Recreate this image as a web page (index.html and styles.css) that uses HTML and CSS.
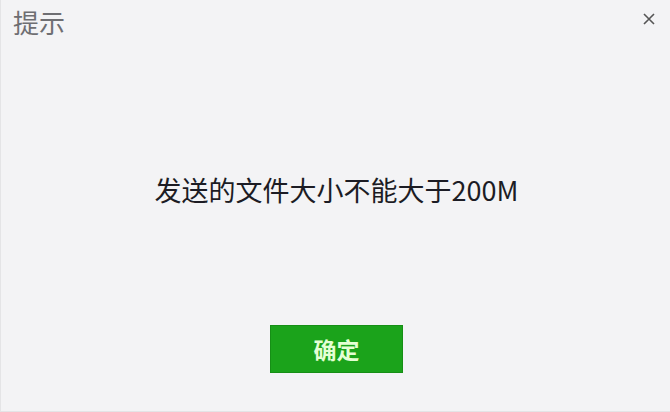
FILE: index.html
```html
<!DOCTYPE html>
<html lang="zh-CN">
<head>
<meta charset="utf-8">
<title>提示</title>
<link rel="stylesheet" href="styles.css">
</head>
<body>
<div class="dialog">
  <div class="header">
    <span class="title">提示</span>
    <span class="close" aria-label="关闭">
      <svg width="12" height="12" viewBox="0 0 12 12"><path d="M1 1L11 11M11 1L1 11" stroke="#555" stroke-width="1.6" fill="none"/></svg>
    </span>
  </div>
  <div class="body">
    <p class="message">发送的文件大小不能大于200M</p>
  </div>
  <div class="footer">
    <button class="ok">确定</button>
  </div>
</div>
</body>
</html>
```

FILE: styles.css
```css
html, body {
  margin: 0;
  padding: 0;
  background: #f3f3f5;
}
.dialog {
  width: 670px;
  height: 412px;
  box-sizing: border-box;
  border-left: 1px solid #e4e4e6;
  border-bottom: 1px solid #e4e4e6;
  display: flex;
  flex-direction: column;
  font-family: "Noto Sans CJK SC", "Noto Sans", sans-serif;
}
.header {
  height: 40px;
  display: flex;
  justify-content: space-between;
  align-items: flex-start;
  padding: 6px 15px 0 12px;
  box-sizing: border-box;
}
.title {
  font-size: 26px;
  line-height: 32px;
  color: #6e6e72;
}
.close {
  display: flex;
  margin-top: 7px;
}
.body {
  flex: 1;
  display: flex;
  align-items: center;
  justify-content: center;
  padding-top: 14px;
}
.message {
  margin: 0 0 0 2px;
  font-size: 27px;
  line-height: 34px;
  color: #1c1c24;
}
.footer {
  display: flex;
  justify-content: center;
  padding-bottom: 38px;
}
.ok {
  width: 133px;
  height: 48px;
  border: 1px solid #168f16;
  background: #1ba31b;
  color: #e4ffd4;
  font-family: "Noto Sans CJK SC", sans-serif;
  font-size: 23px;
  font-weight: bold;
  padding: 0;
  margin-left: 2px;
}
```
